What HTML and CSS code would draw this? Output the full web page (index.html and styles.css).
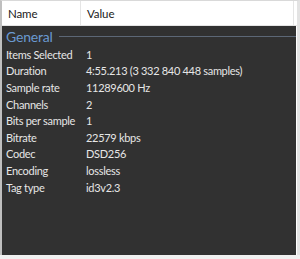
FILE: index.html
```html
<!DOCTYPE html>
<html lang="en">
<head>
    <meta charset="UTF-8">
    <title>Properties</title>
    <link rel="stylesheet" href="styles.css">
</head>
<body>
    <div class="frame">
        <div class="list-header">
            <div class="col col-name">Name</div>
            <div class="col col-value">Value</div>
            <div class="col col-rest"></div>
        </div>
        <div class="list-body">
            <div class="group">
                <span class="group-title">General</span>
                <span class="group-line"></span>
            </div>
            <div class="row"><span class="key">Items Selected</span><span class="val">1</span></div>
            <div class="row"><span class="key">Duration</span><span class="val">4:55.213 (3 332 840 448 samples)</span></div>
            <div class="row"><span class="key">Sample rate</span><span class="val">11289600 Hz</span></div>
            <div class="row"><span class="key">Channels</span><span class="val">2</span></div>
            <div class="row"><span class="key">Bits per sample</span><span class="val">1</span></div>
            <div class="row"><span class="key">Bitrate</span><span class="val">22579 kbps</span></div>
            <div class="row"><span class="key">Codec</span><span class="val">DSD256</span></div>
            <div class="row"><span class="key">Encoding</span><span class="val">lossless</span></div>
            <div class="row"><span class="key">Tag type</span><span class="val">id3v2.3</span></div>
        </div>
    </div>
</body>
</html>
```

FILE: styles.css
```css
body, html {
    margin: 0;
    padding: 0;
    width: 300px;
    height: 259px;
    overflow: hidden;
    background: #f0f0f0;
    font-family: Lato, "Noto Sans", sans-serif;
}

.frame {
    box-sizing: border-box;
    width: 300px;
    height: 255px;
    border-top: 1px solid #d9d9d9;
    border-left: 2px solid #bfbfbf;
    border-right: 3px solid #e3e3e3;
    display: flex;
    flex-direction: column;
    background: #fff;
}

.list-header {
    display: flex;
    height: 24px;
    background: #fff;
    border-bottom: 1px solid #e5e5e5;
    font-size: 11.5px;
    letter-spacing: -0.1px;
    color: #1a1a1a;
}

.col {
    display: flex;
    align-items: center;
    padding-left: 6px;
}

.col-name {
    width: 72px;
    border-right: 1px solid #e5e5e5;
}

.col-value {
    flex: 1;
}

.col-rest {
    width: 3px;
    padding: 0;
    border-left: 1px solid #e5e5e5;
}

.list-body {
    flex: 1;
    background: #313131;
    margin-right: 1px;
}

.group {
    display: flex;
    align-items: center;
    height: 20px;
    padding-left: 4px;
}

.group-title {
    color: #6a99d0;
    font-size: 14px;
    letter-spacing: -0.2px;
}

.group-line {
    flex: 1;
    height: 1px;
    margin-left: 6px;
    background: #5c6776;
}

.row {
    display: flex;
    height: 16.6px;
    align-items: center;
    font-size: 11px;
    letter-spacing: -0.3px;
    color: #e6e6e6;
    padding-left: 4px;
}

.key {
    width: 80px;
    white-space: nowrap;
}

.val {
    white-space: nowrap;
}
```
